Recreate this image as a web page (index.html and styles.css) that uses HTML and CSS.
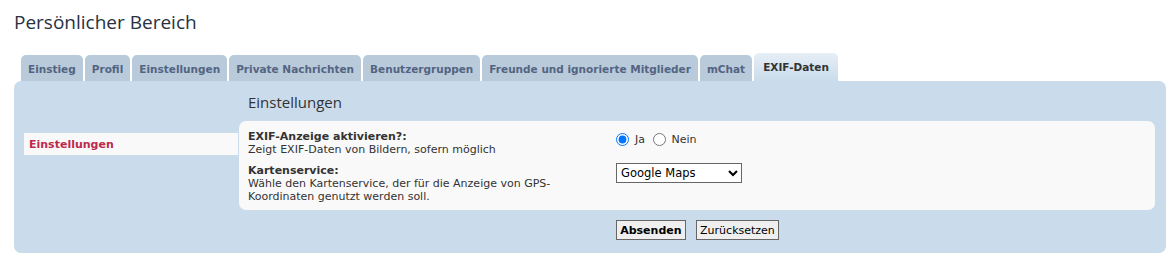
FILE: index.html
```html
<!DOCTYPE html>
<html lang="de">
<head>
  <meta charset="UTF-8">
  <title>Persönlicher Bereich</title>
  <link rel="stylesheet" href="styles.css">
</head>
<body>
  <h1 class="page-title">Persönlicher Bereich</h1>

  <ul class="tabs">
    <li class="tab">Einstieg</li>
    <li class="tab">Profil</li>
    <li class="tab">Einstellungen</li>
    <li class="tab">Private Nachrichten</li>
    <li class="tab">Benutzergruppen</li>
    <li class="tab">Freunde und ignorierte Mitglieder</li>
    <li class="tab">mChat</li>
    <li class="tab active">EXIF-Daten</li>
  </ul>

  <div class="panel">
    <ul class="side-menu">
      <li class="side-item">Einstellungen</li>
    </ul>

    <div class="main">
      <h2 class="section-title">Einstellungen</h2>

      <div class="inner">
        <dl class="row">
          <dt>
            <label class="opt-label">EXIF-Anzeige aktivieren?:</label>
            <span class="opt-desc">Zeigt EXIF-Daten von Bildern, sofern möglich</span>
          </dt>
          <dd class="radios">
            <label class="radio"><input type="radio" name="exif" checked> Ja</label>
            <label class="radio"><input type="radio" name="exif"> Nein</label>
          </dd>
        </dl>
        <dl class="row">
          <dt>
            <label class="opt-label">Kartenservice:</label>
            <span class="opt-desc">Wähle den Kartenservice, der für die Anzeige von GPS-Koordinaten genutzt werden soll.</span>
          </dt>
          <dd>
            <select class="map-select">
              <option>Google Maps</option>
              <option>OpenStreetMap</option>
            </select>
          </dd>
        </dl>
      </div>

      <div class="buttons">
        <button class="btn btn-main">Absenden</button>
        <button class="btn">Zurücksetzen</button>
      </div>
    </div>
  </div>
</body>
</html>
```

FILE: styles.css
```css
body {
  font-family: 'DejaVu Sans', Verdana, sans-serif;
  font-size: 11px;
  color: #333;
  margin: 0;
  padding: 0 6px 0 14px;
  background: #fff;
}
.page-title {
  font-family: 'Open Sans', 'DejaVu Sans', sans-serif;
  font-weight: normal;
  font-size: 19px;
  line-height: 24px;
  color: #28313f;
  margin: 0;
  padding-top: 10px;
}
.tabs {
  list-style: none;
  display: flex;
  gap: 2px;
  margin: 20px 0 0 7px;
  padding: 0;
  height: 27px;
  align-items: flex-end;
}
.tab {
  background: #b9cbdb;
  color: #536482;
  font-weight: bold;
  font-size: 10.5px;
  height: 26px;
  line-height: 28px;
  padding: 0 7px;
  border-radius: 5px 5px 0 0;
  box-sizing: border-box;
}
.tab.active {
  background: linear-gradient(to bottom, #e6eef6, #cadceb);
  color: #333;
  height: 28px;
  line-height: 29px;
  padding: 0 9px;
}
.panel {
  background: #cadceb;
  border-radius: 7px;
  display: flex;
  padding: 0 11px 13px 10px;
  margin-bottom: 4px;
}
.side-menu {
  list-style: none;
  margin: 52px 1px 0 0;
  padding: 0;
  width: 214px;
}
.side-item {
  background: #f9f9f9;
  color: #bc2a4d;
  font-weight: bold;
  height: 22px;
  line-height: 24px;
  padding-left: 5px;
}
.main {
  flex: 1;
}
.section-title {
  font-family: 'Open Sans', 'DejaVu Sans', sans-serif;
  font-weight: normal;
  font-size: 15px;
  line-height: 20px;
  color: #333;
  margin: 11px 0 9px 9px;
}
.inner {
  background: #f9f9f9;
  border-radius: 7px;
  padding: 9px 9px 7px;
}
.row {
  display: grid;
  grid-template-columns: 368px 1fr;
  margin: 0 0 8px;
}
.row:last-child {
  margin-bottom: 0;
}
.row dt {
  padding-right: 40px;
  line-height: 13px;
}
.row dd {
  margin: 0;
}
.radios {
  padding-top: 2px;
}
.opt-label {
  display: block;
  font-weight: bold;
  color: #333;
}
.opt-desc {
  display: block;
}
.radio {
  display: inline-flex;
  align-items: center;
  margin-right: 4px;
  color: #333;
  font-size: 11px;
}
.radio input {
  margin: 1px 6px 0 0;
}
.map-select {
  width: 126px;
  height: 20px;
  font-family: 'DejaVu Sans', Verdana, sans-serif;
  font-size: 11.5px;
  color: #000;
  border: 1px solid #666;
  border-radius: 0;
  background: #fff;
  margin-top: -1px;
}
.buttons {
  text-align: center;
  padding: 10px 0 0;
}
.btn {
  font-family: 'DejaVu Sans', Verdana, sans-serif;
  font-size: 11px;
  background: #efefef;
  color: #000;
  border: 1px solid #666;
  border-radius: 0;
  height: 20px;
  padding: 0 3px;
  margin: 0 3px 0 4px;
}
.btn-main {
  font-weight: bold;
}
```
